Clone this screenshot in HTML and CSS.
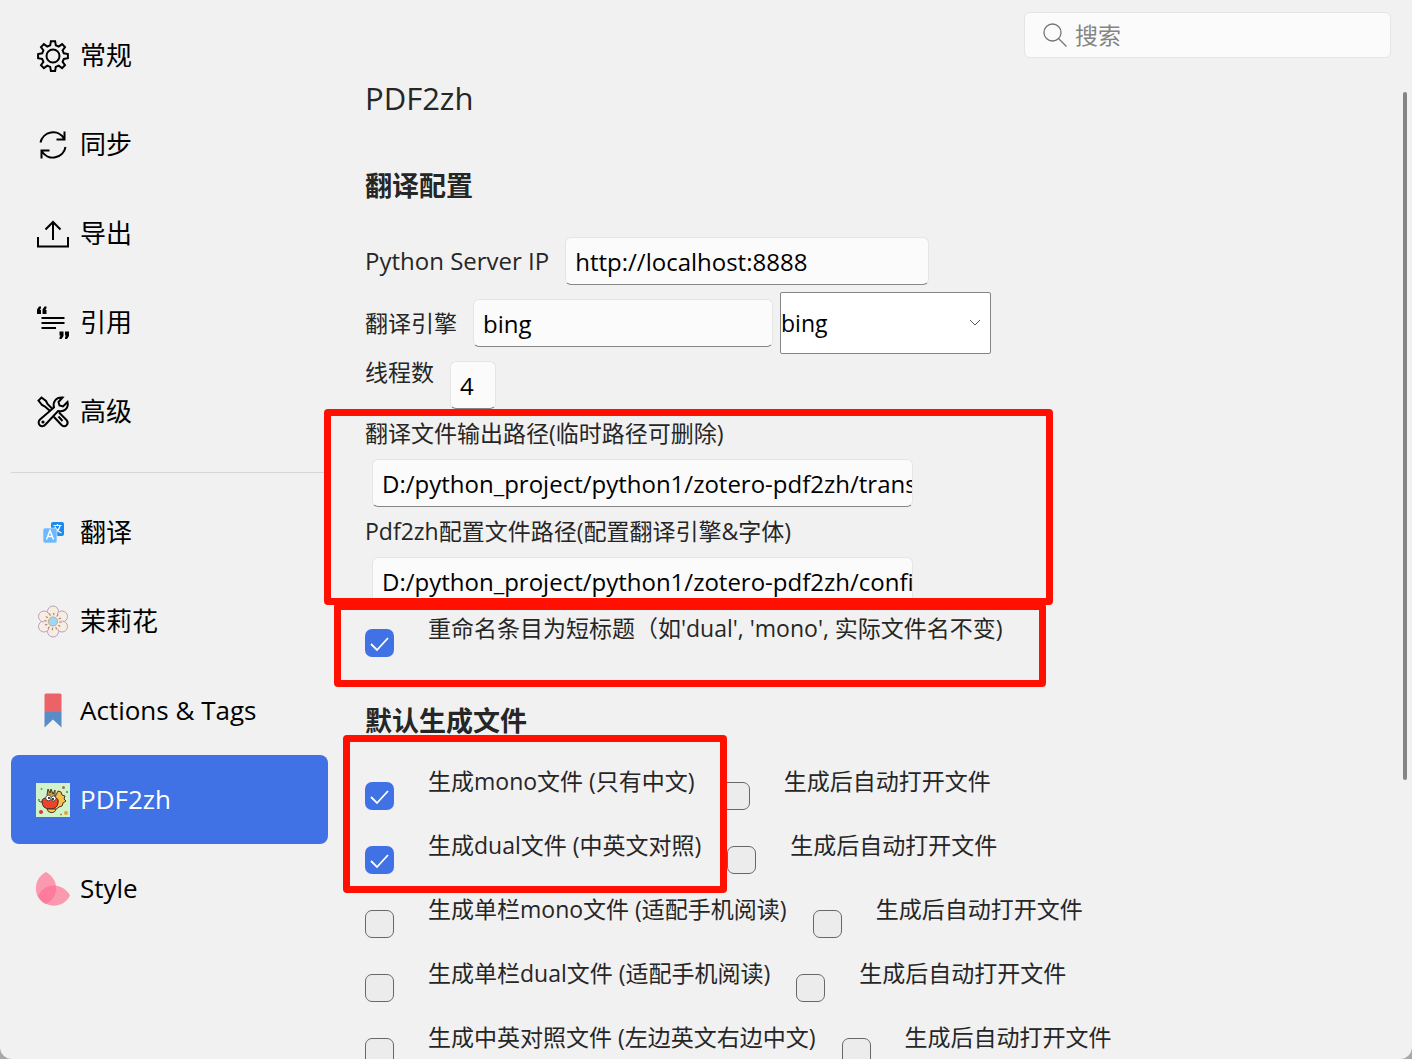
FILE: index.html
```html
<!DOCTYPE html>
<html lang="zh-CN">
<head>
<meta charset="utf-8">
<title>PDF2zh</title>
<link rel="stylesheet" href="styles.css">
</head>
<body>
<div class="window">
  <nav class="sidebar">
    <a class="nav-item" href="#general">
      <svg class="icon line" viewBox="0 0 34 34"><path d="M14.9 2.2h4.2l.7 4.1 2.9 1.2 3.4-2.4 2.9 2.9-2.4 3.4 1.2 2.9 4.1.7v4.2l-4.1.7-1.2 2.9 2.4 3.4-2.9 2.9-3.4-2.4-2.9 1.2-.7 4.1h-4.2l-.7-4.1-2.9-1.2-3.4 2.4L5 26.200l2.400-3.400-1.200-2.900-4.100-.7V15l4.100-.7 1.200-2.900L5 8l2.900-2.900 3.400 2.400 2.900-1.200z"/><circle cx="17" cy="17" r="6.500"/></svg>
      <span>常规</span>
    </a>
    <a class="nav-item" href="#sync">
      <svg class="icon line" viewBox="0 0 34 34"><path d="M4.500 14.500A12.800 12.800 0 0 1 28 10.500M28.500 3.500v8H20.500M29.500 19A12.800 12.800 0 0 1 6 23.500M5.500 30.500v-8h8"/></svg>
      <span>同步</span>
    </a>
    <a class="nav-item" href="#export">
      <svg class="icon line" viewBox="0 0 34 34"><path d="M2 20v9.500h30V20M17 23V5M9.500 12.500 17 5l7.500 7.500"/></svg>
      <span>导出</span>
    </a>
    <a class="nav-item" href="#cite">
      <svg class="icon line" viewBox="0 0 34 34"><path d="M5.500 12h23M5.500 17h23M5.500 22H20"/><path class="solid" d="M5 .500v1.500L4 4h1v4H1V3.500L3 .500zM10.500.500v1.500L9.500 4h1v4h-4V3.500L8.500.500zM23.500 25.500h4V30l-2 3h-2v-1.500l1-2h-1zM29 25.500h4V30l-2 3h-2v-1.500l1-2h-1z"/></svg>
      <span>引用</span>
    </a>
    <a class="nav-item" href="#advanced">
      <svg class="icon line" viewBox="0 0 34 34"><path d="M13.500 15.500 9 11.500 6 10 2.500 5.500 5.500 2.500 10 6l1.500 3 4.500 4.500M18 12.500C16.500 7 20 2 26.500 2.500L22.500 7l1 3.500 3.500 1L31.500 7c1.500 6-3 10.500-9.500 9L9.500 29.500c-4 4.500-9.500-1-5.500-5zM18 22l7.500 8c4 3.500 8-1.500 5-5l-7.500-7.500M22.500 21.500l4 4.500"/><circle class="solid" cx="7" cy="27" r="1.600"/></svg>
      <span>高级</span>
    </a>
    <hr class="nav-divider">
    <a class="nav-item" href="#translate">
      <svg class="icon" viewBox="0 0 34 34"><rect x="15" y="6" width="13" height="14" rx="2" fill="#1b8bef"/><path d="M17.500 9.500h8M21.500 8v1.500M24 10c-1 3.500-3 5.500-6 7M19 10.500c1 3 3 5 6.500 6.500" stroke="#fff" fill="none" stroke-width="1.200"/><rect x="7" y="12" width="14" height="15" rx="2" fill="#6bbaff" stroke="#f1f1f1" stroke-width=".6"/><path d="m10.500 23.500 3.500-9 3.500 9M11.800 20.500h4.400" stroke="#fff" fill="none" stroke-width="1.400"/></svg>
      <span>翻译</span>
    </a>
    <a class="nav-item" href="#jasmine">
      <svg class="icon" viewBox="0 0 34 34"><g fill="#f6eee2" stroke="#b9a0c0" stroke-width="1"><circle cx="17" cy="6.500" r="5.500"/><circle cx="26" cy="11.500" r="5.500"/><circle cx="26" cy="21.500" r="5.500"/><circle cx="17" cy="26.500" r="5.500"/><circle cx="8" cy="21.500" r="5.500"/><circle cx="8" cy="11.500" r="5.500"/></g><circle cx="17" cy="16.500" r="9" fill="#f8ecd6"/><circle cx="17" cy="16.500" r="7.500" fill="none" stroke="#a77d8d" stroke-width="2.500" stroke-dasharray="1.100 2.827"/><circle cx="17" cy="16.500" r="4.500" fill="#9bd9fa" stroke="#c6a687"/></svg>
      <span>茉莉花</span>
    </a>
    <a class="nav-item" href="#actions">
      <svg class="icon" viewBox="0 0 34 34"><path d="M8.500 18h17v15.500L17 25.500l-8.500 8z" fill="#5a8cc8"/><path d="M8.500 18V1q0-1.500 1.500-1.500h14q1.500 0 1.500 1.500v17z" fill="#ec6367"/></svg>
      <span>Actions &amp; Tags</span>
    </a>
    <a class="nav-item selected" href="#pdf2zh" aria-current="page">
      <svg class="icon" viewBox="0 0 34 34"><path fill="#d2f2ca" d="M0 0h34v34H0z"/><path d="m22 8 3 1 1 3 3 1-1 3 2 2-3 2-1 3-3 1-4 3-5-3z" fill="#f5bf4b" stroke="#473524"/><path d="m11 12 1-6 2 4 1-4 2 5 2-4v6" fill="#bd9a38" stroke="#4b3822"/><path d="M6 18q0-3 5-3h8q4 0 3 5-1 6-8 6-8 0-8-8z" fill="#ee4326" stroke="#432a22"/><circle cx="12.500" cy="15" r="2.800" fill="#fff" stroke="#333" stroke-width=".8"/><circle cx="17.500" cy="15.500" r="2.500" fill="#fff" stroke="#333" stroke-width=".8"/><circle cx="13" cy="15" r="1"/><circle cx="17" cy="16" r="1"/><path d="M11 26h9q-1 4-5 3.500-3 0-4-3.500z" fill="#f8c954" stroke="#473524"/><path d="M6 19q-4 0-3-3" fill="none" stroke="#333"/><circle cx="5" cy="29" r="2" fill="#ce3d3c"/><circle cx="30" cy="30" r="2" fill="#e1a436"/><circle cx="27.500" cy="4.500" r="1.500" fill="#ab665c"/><circle cx="31" cy="9" r="1" fill="#368b87"/><circle cx="5.500" cy="6" r="1" fill="#629369"/><circle cx="25" cy="31.500" r="1" fill="#889642"/></svg>
      <span>PDF2zh</span>
    </a>
    <a class="nav-item" href="#style">
      <svg class="icon" viewBox="0 0 34 34"><path d="M10 0C23 7 24 25 10 32-3 27-4 7 10 0z" fill="#ff6f91" fill-opacity=".68"/><path d="M34 23.500C27 37 9 37 2 24 8 10 27 10 34 23.500z" fill="#ff6f91" fill-opacity=".68"/></svg>
      <span>Style</span>
    </a>
  </nav>

  <main class="pane">
    <header class="toolbar">
      <label class="search">
        <svg class="search-icon" viewBox="0 0 24 24"><circle cx="9.500" cy="9.500" r="8.500"/><path d="m15.500 15.500 8 8"/></svg>
        <input type="search" placeholder="搜索" aria-label="搜索">
      </label>
    </header>

    <div class="content">
      <h1>PDF2zh</h1>
      <section>
        <h2>翻译配置</h2>
        <div class="field server">
          <label for="server">Python Server IP</label>
          <input class="text" id="server" type="text" value="http://localhost:8888">
        </div>
        <div class="field engine">
          <label for="engine">翻译引擎</label>
          <input class="text" id="engine" type="text" value="bing">
          <div class="select">
            <select aria-label="翻译引擎"><option>bing</option></select>
            <svg class="chevron" viewBox="0 0 12 8"><path d="m1 1 5 5 5-5"/></svg>
          </div>
        </div>
        <div class="field threads">
          <label for="threads">线程数</label>
          <input class="text" id="threads" type="text" value="4">
        </div>
        <div class="paths">
          <label for="output">翻译文件输出路径(临时路径可删除)</label>
          <input class="text" id="output" type="text" value="D:/python_project/python1/zotero-pdf2zh/trans">
          <label for="config">Pdf2zh配置文件路径(配置翻译引擎&amp;字体)</label>
          <input class="text" id="config" type="text" value="D:/python_project/python1/zotero-pdf2zh/confi">
          <div class="mark mark-paths"></div>
        </div>
        <div class="rename">
          <div class="check-row">
            <label class="check"><input type="checkbox" checked><span>重命名条目为短标题（如'dual', 'mono', 实际文件名不变)</span></label>
          </div>
          <div class="mark mark-rename"></div>
        </div>
      </section>

      <section class="outputs">
        <h2>默认生成文件</h2>
        <div class="check-row">
          <label class="check"><input type="checkbox" checked><span>生成mono文件 (只有中文)</span></label>
          <label class="check"><input type="checkbox"><span>生成后自动打开文件</span></label>
        </div>
        <div class="check-row">
          <label class="check"><input type="checkbox" checked><span>生成dual文件 (中英文对照)</span></label>
          <label class="check"><input type="checkbox"><span>生成后自动打开文件</span></label>
        </div>
        <div class="check-row">
          <label class="check"><input type="checkbox"><span>生成单栏mono文件 (适配手机阅读)</span></label>
          <label class="check"><input type="checkbox"><span>生成后自动打开文件</span></label>
        </div>
        <div class="check-row">
          <label class="check"><input type="checkbox"><span>生成单栏dual文件 (适配手机阅读)</span></label>
          <label class="check"><input type="checkbox"><span>生成后自动打开文件</span></label>
        </div>
        <div class="check-row">
          <label class="check"><input type="checkbox"><span>生成中英对照文件 (左边英文右边中文)</span></label>
          <label class="check"><input type="checkbox"><span>生成后自动打开文件</span></label>
        </div>
        <div class="mark mark-outputs"></div>
      </section>
    </div>
    <div class="scroll-thumb"></div>
  </main>
</div>
</body>
</html>
```
FILE: styles.css
```css
* {
  box-sizing: border-box;
}

body {
  margin: 0;
  background: #a8a8a8;
  color: #262626;
  font: 23px/28px "Open Sans", "Noto Sans CJK SC", sans-serif;
}

input,
select {
  font: inherit;
  color: #000;
}

.window {
  display: flex;
  height: 100vh;
  overflow: hidden;
  background: #f1f1f1;
  border-radius: 0 0 12px 12px;
}

/* Sidebar */
.sidebar {
  flex: none;
  width: 328px;
  padding: 11px 0 0 11px;
}

.nav-item {
  display: flex;
  align-items: center;
  gap: 10px;
  height: 89px;
  padding-left: 25px;
  border-radius: 8px;
  color: #000;
  font-size: 26px;
  text-decoration: none;
}

.nav-item span {
  padding-bottom: 2px;
}

.nav-item.selected {
  background: #4072e5;
  color: #fff;
}

.icon {
  flex: none;
  width: 34px;
  height: 34px;
  overflow: visible;
}

.line {
  fill: none;
  stroke: #000;
  stroke-width: 2;
}

.line .solid {
  fill: #000;
  stroke: none;
}

.nav-divider {
  height: 1px;
  margin: 16px 0 15px;
  border: 0;
  background: #d6d6d6;
}

/* Pane */
.pane {
  position: relative;
  display: flex;
  flex: 1;
  flex-direction: column;
  min-width: 0;
}

.toolbar {
  display: flex;
  justify-content: flex-end;
  padding: 12px 21px 0 0;
}

.search {
  display: flex;
  align-items: center;
  gap: 8px;
  width: 367px;
  height: 46px;
  padding: 0 18px;
  background: #fbfbfb;
  border: 1px solid #e5e5e5;
  border-radius: 6px;
}

.search-icon {
  flex: none;
  width: 24px;
  height: 24px;
  fill: none;
  stroke: #757575;
  stroke-width: 1.3;
}

.search input {
  flex: 1;
  min-width: 0;
  padding: 0;
  border: 0;
  outline: 0;
  background: none;
}

.search input::placeholder {
  color: #858585;
}

.content {
  flex: 1;
  min-height: 0;
  padding: 20px 0 0 37px;
}

h1 {
  margin: 0 0 48px;
  font-size: 31px;
  font-weight: 400;
  line-height: 40px;
}

h2 {
  margin: 0;
  font-size: 27px;
  font-weight: 700;
  line-height: 40px;
}

.text {
  height: 48px;
  padding: 0 0 0 9px;
  background: #fbfbfb;
  border: 1px solid #e5e5e5;
  border-bottom-color: #868686;
  border-radius: 6px;
  font-size: 24px;
}

.field {
  display: flex;
  align-items: center;
  gap: 16px;
}

.server {
  margin-top: 31px;
}

.server label {
  font-size: 24px;
}

.server .text {
  width: 364px;
}

.engine {
  margin-top: 7px;
}

.engine .text {
  width: 300px;
}

.select {
  position: relative;
  width: 211px;
  margin-left: -9px;
}

.select select {
  display: block;
  width: 100%;
  height: 62px;
  padding: 0;
  appearance: none;
  background: #fff;
  border: 1px solid #858585;
  border-radius: 2px;
  line-height: 34px;
}

.chevron {
  position: absolute;
  top: 27px;
  right: 10px;
  width: 12px;
  height: 8px;
  fill: none;
  stroke: #555;
  pointer-events: none;
}

.threads {
  align-items: flex-start;
  padding-top: 7px;
}

.threads label {
  margin-top: -3px;
}

.threads .text {
  width: 46px;
}

.paths {
  position: relative;
  display: flex;
  flex-direction: column;
  align-items: flex-start;
  padding-top: 10px;
}

.paths label + .text {
  width: 541px;
  margin: 12px 0 0 7px;
}

.paths .text + label {
  margin-top: 10px;
}

.rename,
.outputs {
  position: relative;
}

.rename {
  padding-top: 9px;
}

.outputs h2 {
  margin: 23px 0 26px;
}

.check-row {
  display: flex;
  gap: 26px;
  height: 64px;
}

.check {
  display: flex;
  align-items: flex-start;
  gap: 34px;
  white-space: nowrap;
}

.check input {
  flex: none;
  width: 29px;
  height: 28px;
  margin: 15px 0 0;
  appearance: none;
  background: #ececec;
  border: 1px solid #686868;
  border-radius: 7px;
}

.check input:checked {
  background: #4072e5 url("data:image/svg+xml,%3Csvg xmlns='http://www.w3.org/2000/svg' viewBox='0 0 29 28'%3E%3Cpath d='M6 15l6 6L23 9' fill='none' stroke='white' stroke-width='1.8'/%3E%3C/svg%3E") center / 29px 28px no-repeat;
  border: 0;
}

/* Red outlines over the highlighted settings */
.mark {
  position: absolute;
  border: 7px solid #ff1000;
  border-radius: 4px;
  pointer-events: none;
}

.mark-paths {
  top: 0;
  left: -41px;
  width: 729px;
  height: 196px;
}

.mark-rename {
  top: -2px;
  left: -31px;
  width: 712px;
  height: 84px;
}

.mark-outputs {
  top: 34px;
  left: -22px;
  width: 384px;
  height: 158px;
}

.scroll-thumb {
  position: absolute;
  top: 92px;
  right: 5px;
  width: 4px;
  height: 65%;
  background: #858585;
  border-radius: 2px;
}
```
